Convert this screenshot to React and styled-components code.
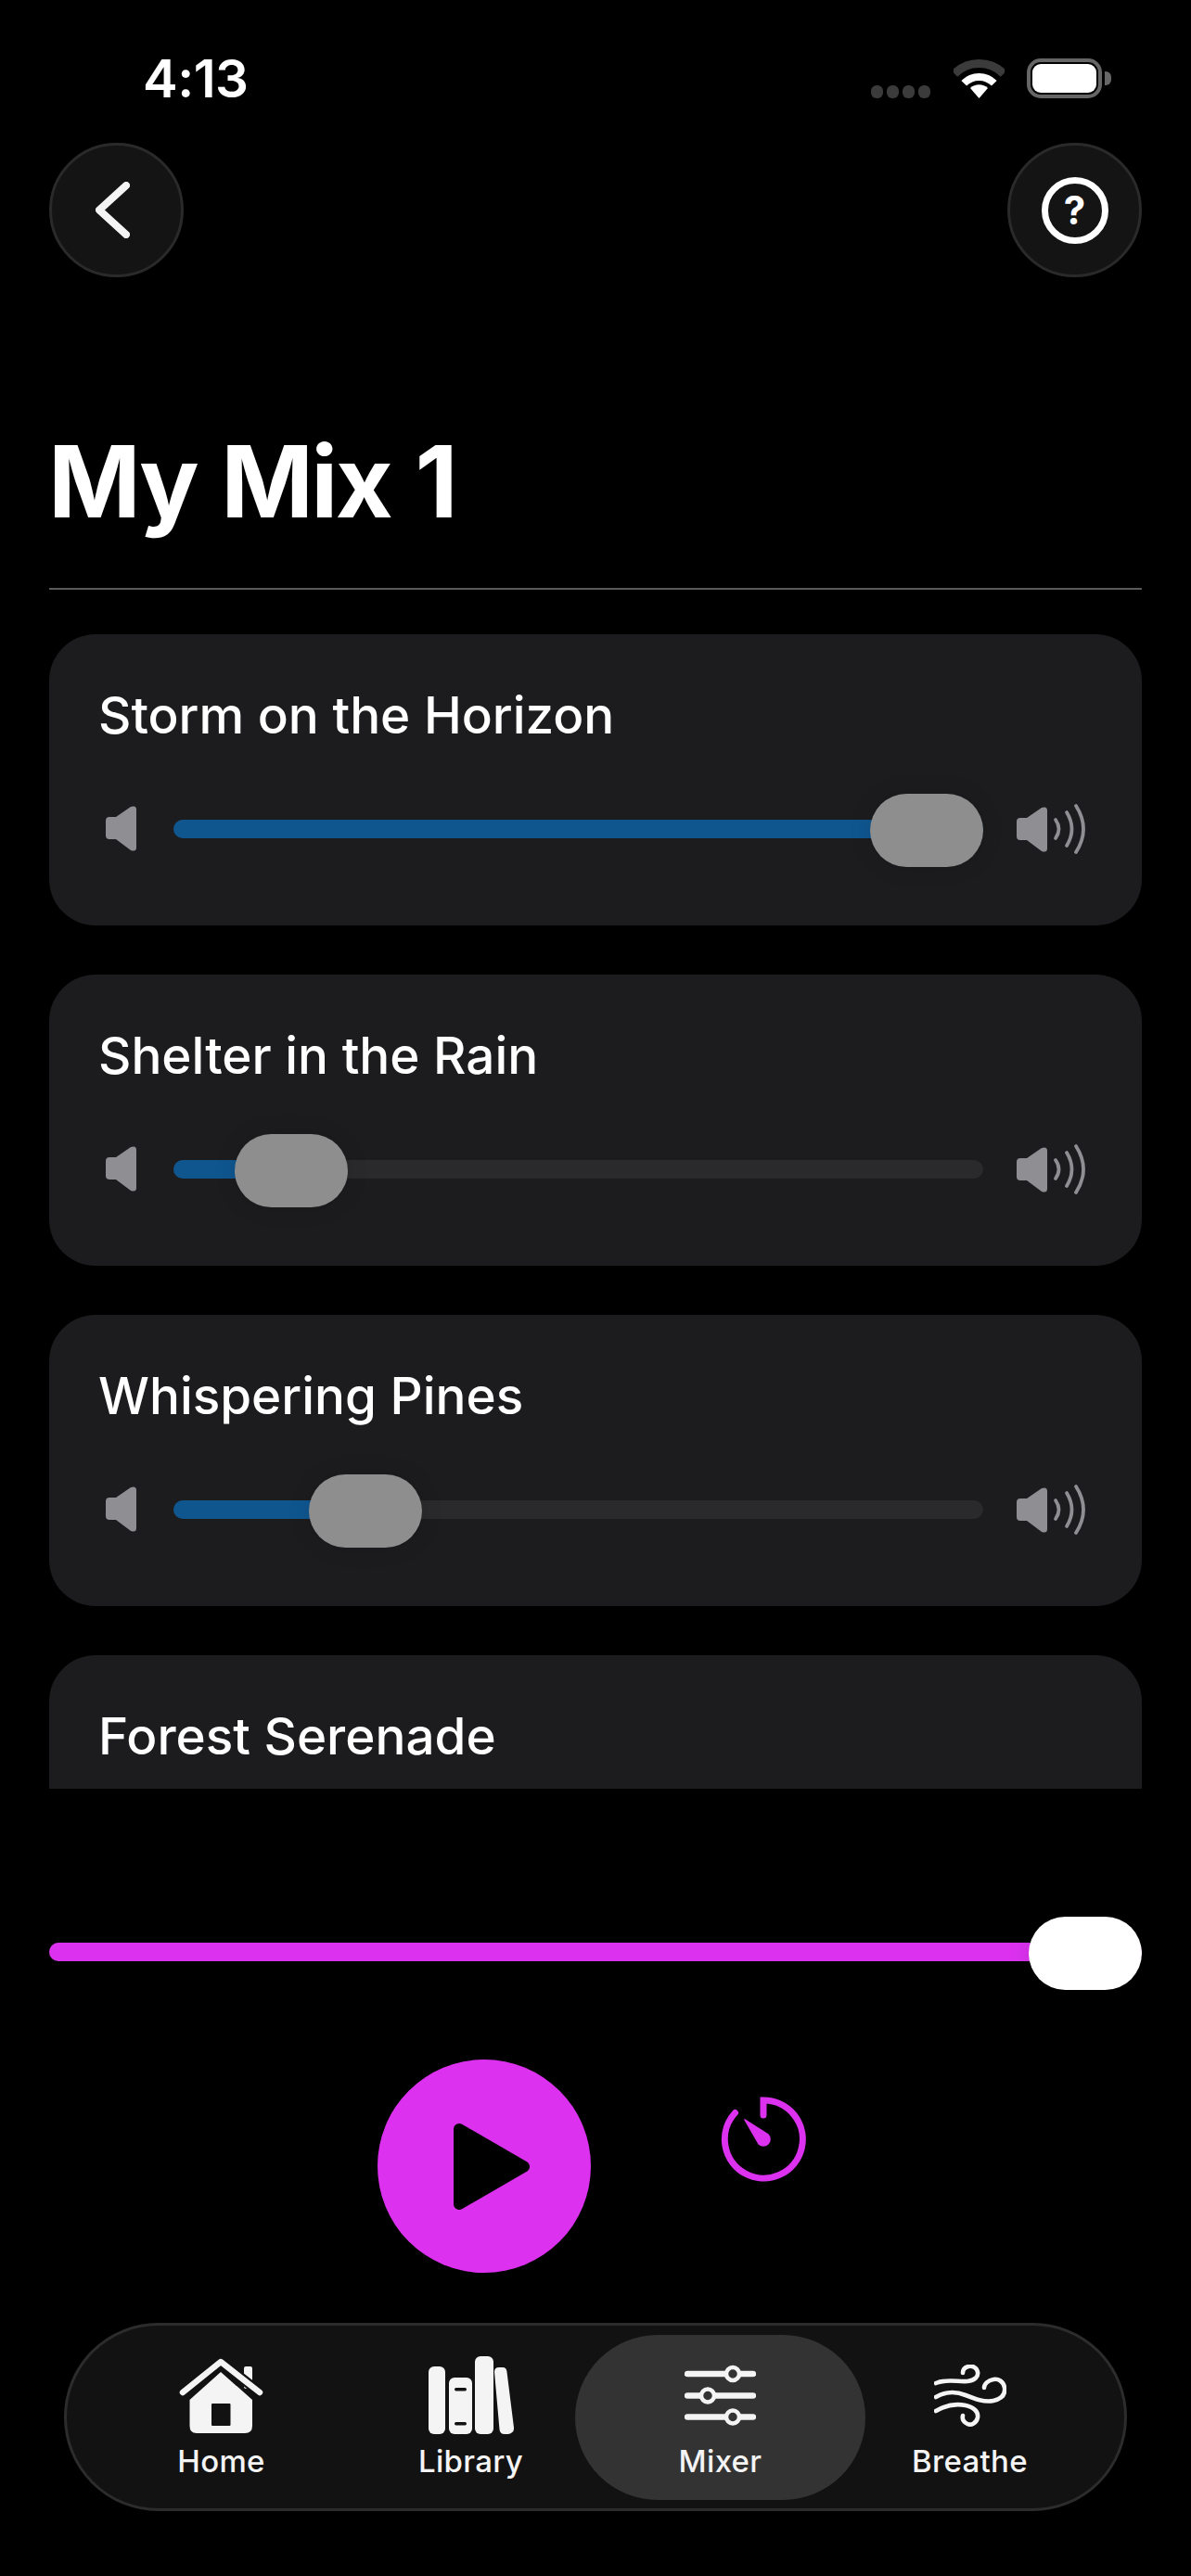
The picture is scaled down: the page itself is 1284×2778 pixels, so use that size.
import React from "react";
import styled, { createGlobalStyle } from "styled-components";

const GlobalStyle = createGlobalStyle`
  html, body {
    margin: 0;
    padding: 0;
    background: #000;
    font-family: Inter, "Liberation Sans", sans-serif;
    color: #fff;
  }
  * { box-sizing: border-box; }
`;

const Screen = styled.div`
  width: 1284px;
  height: 2778px;
  overflow: hidden;
  background: #000;
  display: flex;
  flex-direction: column;
`;

const StatusBar = styled.div`
  height: 154px;
  padding: 63px 96px 0 154px;
  display: flex;
  justify-content: space-between;
  align-items: flex-start;
`;

const Time = styled.div`
  font-size: 56.5px;
  font-weight: 600;
  line-height: 43px;
  letter-spacing: -0.5px;
`;

const StatusIcons = styled.div`
  display: flex;
  align-items: flex-start;
`;

const SignalDots = styled.div`
  display: flex;
  gap: 4px;
  margin-top: 29px;
  margin-right: 25px;
`;

const SignalDot = styled.span`
  width: 13px;
  height: 14px;
  border-radius: 6px;
  background: #3b3b3b;
`;

const WifiIcon = styled.svg`
  width: 55px;
  height: 42px;
  margin-top: 1px;
  margin-right: 24px;
`;

const Battery = styled.div`
  position: relative;
  width: 81px;
  height: 43px;
  padding: 2px;
  border: 4px solid #666;
  border-radius: 15px;

  &::after {
    content: "";
    position: absolute;
    right: -14px;
    top: 10px;
    width: 7px;
    height: 15px;
    border-radius: 0 6px 6px 0;
    background: #666;
  }
`;

const BatteryLevel = styled.div`
  height: 100%;
  border-radius: 9px;
  background: #fff;
`;

const Header = styled.div`
  padding: 0 53px;
  display: flex;
  justify-content: space-between;
`;

const RoundButton = styled.button`
  width: 145px;
  height: 145px;
  padding: 0;
  border-radius: 50%;
  border: 3px solid #2a2a2a;
  background: #141414;
  color: #fff;
  display: flex;
  align-items: center;
  justify-content: center;
`;

const BackIcon = styled.svg`
  width: 37px;
  height: 61px;
  margin-right: 9px;
`;

const HelpRing = styled.span`
  width: 72px;
  height: 72px;
  border-radius: 50%;
  border: 7px solid #fff;
  display: flex;
  align-items: center;
  justify-content: center;
  font-family: Inter, sans-serif;
  font-size: 42px;
  font-weight: 700;
  line-height: 1;
`;

const Title = styled.h1`
  margin: 160px 52px 0;
  font-size: 107px;
  font-weight: 700;
  line-height: 120px;
  letter-spacing: -2.6px;
  word-spacing: 3.5px;
`;

const Divider = styled.div`
  margin: 55px 53px 0;
  height: 2px;
  background: #5a5a5a;
`;

const MixList = styled.div`
  margin: 48px 53px 0;
  height: 1245px;
  overflow: hidden;
  display: flex;
  flex-direction: column;
  gap: 53px;
`;

const Card = styled.section`
  flex: none;
  height: 314px;
  padding: 52px 61px 0;
  border-radius: 50px;
  background: #1c1c1e;
`;

const CardTitle = styled.h2`
  margin: 0 0 48px -8px;
  font-size: 54.8px;
  font-weight: 500;
  line-height: 70px;
`;

const SliderRow = styled.div`
  height: 79px;
  display: flex;
  align-items: center;
`;

const Track = styled.div`
  position: relative;
  flex: 1;
  height: 20px;
  border-radius: 10px;
  background: ${(p) => p.$bg};
`;

const Fill = styled.div`
  height: 100%;
  border-radius: 10px;
  background: ${(p) => p.$color};
  width: calc(${(p) => p.$value * 100}% + ${(p) => (1 - p.$value) * 61}px);
`;

const Thumb = styled.div`
  position: absolute;
  top: 50%;
  left: calc((100% - 122px) * ${(p) => p.$value});
  width: 122px;
  height: 79px;
  margin-top: -38px;
  border-radius: 40px;
  background: ${(p) => p.$color};
  box-shadow: 0 0 24px rgba(0, 0, 0, 0.12);
`;

const SpeakerLow = styled.svg`
  flex: none;
  width: 33px;
  height: 49px;
  margin-right: 40px;
`;

const SpeakerHigh = styled.svg`
  flex: none;
  width: 74px;
  height: 54px;
  margin-left: 36px;
`;

const MasterSlider = styled.div`
  margin: 136px 53px 0;
  height: 79px;
  display: flex;
  align-items: center;
`;

const Transport = styled.div`
  margin-top: 77px;
  padding-left: 407px;
  display: flex;
  align-items: flex-start;
  gap: 140px;
`;

const PlayButton = styled.button`
  width: 230px;
  height: 230px;
  padding: 0 0 0 15px;
  border: none;
  border-radius: 50%;
  background: #dc32f0;
  display: flex;
  align-items: center;
  justify-content: center;
`;

const PlayIcon = styled.svg`
  width: 82px;
  height: 93px;
`;

const TimerIcon = styled.svg`
  width: 92px;
  height: 92px;
  margin-top: 40px;
`;

const TabBar = styled.nav`
  margin: 54px 69px 0;
  height: 203px;
  padding: 10px 32px;
  border: 3px solid #2c2c2c;
  border-radius: 102px;
  background: #121212;
  display: grid;
  grid-template-columns: repeat(4, 1fr);
`;

const Tab = styled.div`
  height: 178px;
  margin: ${(p) => (p.$active ? "0 -22px" : "0")};
  padding-top: 20px;
  border-radius: 89px;
  background: ${(p) => (p.$active ? "#333333" : "transparent")};
  display: flex;
  flex-direction: column;
  align-items: center;
`;

const TabIconBox = styled.div`
  height: 90px;
  display: flex;
  align-items: center;
  justify-content: center;
`;

const TabLabel = styled.div`
  margin-top: 6px;
  font-size: 33px;
  font-weight: 500;
  line-height: 40px;
  letter-spacing: 0.3px;
  color: #f4f4f4;
`;

const SpeakerCone = () => (
  <path d="M4 12 H11 L27 1 Q33 -1 33 4 V45 Q33 50 27 48 L11 36 H4 Q0 36 0 32 V16 Q0 12 4 12 Z" />
);

const VolumeLow = () => (
  <SpeakerLow viewBox="0 0 33 49" fill="#8e8e93">
    <SpeakerCone />
  </SpeakerLow>
);

const VolumeHigh = () => (
  <SpeakerHigh viewBox="0 0 74 54">
    <g transform="translate(0 3)" fill="#8e8e93">
      <SpeakerCone />
    </g>
    <g fill="none" stroke="#8e8e93" strokeWidth="3.8" strokeLinecap="round">
      <path d="M42 17 Q49 27 42 37" />
      <path d="M54 9 Q65 27 54 45" />
      <path d="M64 2 Q80 27 64 52" />
    </g>
  </SpeakerHigh>
);

const HomeIcon = () => (
  <svg width="91" height="81" viewBox="0 0 91 81" fill="#f4f4f4">
    <rect x="70" y="9" width="9" height="24" rx="2" />
    <path d="M45 15 L79 45 V73 Q79 81 71 81 H19 Q11.5 81 11.5 73 V45 Z" />
    <path d="M4 37 L45 4 L87 37" fill="none" stroke="#121212" strokeWidth="11" strokeLinecap="round" strokeLinejoin="round" />
    <path d="M4 37 L45 4 L87 37" fill="none" stroke="#f4f4f4" strokeWidth="6.5" strokeLinecap="round" strokeLinejoin="round" />
    <rect x="35" y="49" width="20.5" height="24" rx="1" fill="#121212" />
  </svg>
);

const LibraryIcon = () => (
  <svg width="92" height="84" viewBox="0 0 92 84" fill="#f4f4f4">
    <rect x="0" y="11" width="18" height="73" rx="6" />
    <rect x="22" y="23" width="25" height="61" rx="6" />
    <rect x="28" y="34" width="13" height="3.5" rx="1.7" fill="#121212" />
    <rect x="28" y="71" width="13" height="3.5" rx="1.7" fill="#121212" />
    <rect x="50" y="0" width="20" height="84" rx="6" />
    <path d="M71 17 Q71 12 76 12 H80 Q84 12 84.5 17 L92 77 Q92.5 83 86 84 H82 Q77 84 76.5 79 Z" />
  </svg>
);

const MixerKnob = ({ x, y }) => (
  <circle cx={x} cy={y} r="7" fill="#333333" stroke="#f4f4f4" strokeWidth="4.5" />
);

const MixerIcon = () => (
  <svg width="77" height="67" viewBox="0 0 77 67">
    <g stroke="#f4f4f4" strokeWidth="6.5" strokeLinecap="round">
      <path d="M3 10 H74" />
      <path d="M3 33.5 H74" />
      <path d="M3 56.5 H74" />
    </g>
    <MixerKnob x={52} y={10} />
    <MixerKnob x={25} y={33.5} />
    <MixerKnob x={52} y={56.5} />
  </svg>
);

const BreatheIcon = () => (
  <svg width="78" height="67" viewBox="0 0 78 67" fill="none" stroke="#f4f4f4" strokeWidth="4.6" strokeLinecap="round">
    <path d="M2 20 C14 15 26 19 36 18 C44 17 48 13 47 8 C46 3 41 1 37 2 C33 3 31 6 31 9" />
    <path d="M2 35 C14 28 24 29 34 33 C44 37 54 41 64 39 C73 37 77 32 76 25 C75 18 69 15 64 16 C58 17 54 21 54 25" />
    <path d="M2 50 C12 44 24 42 34 44 C43 46 48 51 47 57 C46 63 40 66 36 64 C32 62 30 59 31 55" />
  </svg>
);

const mixes = [
  { name: "Storm on the Horizon", value: 1 },
  { name: "Shelter in the Rain", value: 0.088 },
  { name: "Whispering Pines", value: 0.194 },
  { name: "Forest Serenade", value: 0.3 },
];

const tabs = [
  { label: "Home", icon: <HomeIcon /> },
  { label: "Library", icon: <LibraryIcon /> },
  { label: "Mixer", icon: <MixerIcon />, active: true },
  { label: "Breathe", icon: <BreatheIcon /> },
];

const App = () => {
  return (
    <Screen>
      <GlobalStyle />

      <StatusBar>
        <Time>4:13</Time>
        <StatusIcons>
          <SignalDots>
            <SignalDot />
            <SignalDot />
            <SignalDot />
            <SignalDot />
          </SignalDots>
          <WifiIcon viewBox="0 0 55 42" fill="none">
            <path d="M1 15.5 A37.5 37.5 0 0 1 54 15.5" stroke="#3b3b3b" strokeWidth="9" />
            <path d="M11.2 25.7 A23 23 0 0 1 43.8 25.7" stroke="#fff" strokeWidth="8" />
            <path d="M27.5 42 L18 31 A14 14 0 0 1 37 31 Z" fill="#fff" />
          </WifiIcon>
          <Battery>
            <BatteryLevel />
          </Battery>
        </StatusIcons>
      </StatusBar>

      <Header>
        <RoundButton>
          <BackIcon viewBox="0 0 37 61" fill="none" stroke="#f4f4f4" strokeWidth="8" strokeLinecap="round" strokeLinejoin="round">
            <path d="M33 4 L4 30.5 L33 57" />
          </BackIcon>
        </RoundButton>
        <RoundButton>
          <HelpRing>?</HelpRing>
        </RoundButton>
      </Header>

      <Title>My Mix 1</Title>
      <Divider />

      <MixList>
        {mixes.map((mix) => (
          <Card key={mix.name}>
            <CardTitle>{mix.name}</CardTitle>
            <SliderRow>
              <VolumeLow />
              <Track $bg="#2a2a2c">
                <Fill $color="#0f568f" $value={mix.value} />
                <Thumb $color="#8e8e8e" $value={mix.value} />
              </Track>
              <VolumeHigh />
            </SliderRow>
          </Card>
        ))}
      </MixList>

      <MasterSlider>
        <Track $bg="#2a2a2c">
          <Fill $color="#dc32f0" $value={1} />
          <Thumb $color="#fff" $value={1} />
        </Track>
      </MasterSlider>

      <Transport>
        <PlayButton>
          <PlayIcon viewBox="0 0 82 93" fill="#000" stroke="#000" strokeWidth="12" strokeLinejoin="round">
            <path d="M6 6 L76 46.5 L6 87 Z" />
          </PlayIcon>
        </PlayButton>
        <TimerIcon viewBox="0 0 92 92" fill="none">
          <path d="M46 20 V4 A42 42 0 1 1 15.5 17.5" stroke="#dc32f0" strokeWidth="7" strokeLinecap="round" />
          <path d="M26 25 L51 41 A7 7 0 1 1 41 51 Z" fill="#dc32f0" stroke="#dc32f0" strokeWidth="1.5" strokeLinejoin="round" />
        </TimerIcon>
      </Transport>

      <TabBar>
        {tabs.map((tab) => (
          <Tab key={tab.label} $active={tab.active}>
            <TabIconBox>{tab.icon}</TabIconBox>
            <TabLabel>{tab.label}</TabLabel>
          </Tab>
        ))}
      </TabBar>
    </Screen>
  );
};

export default App;
